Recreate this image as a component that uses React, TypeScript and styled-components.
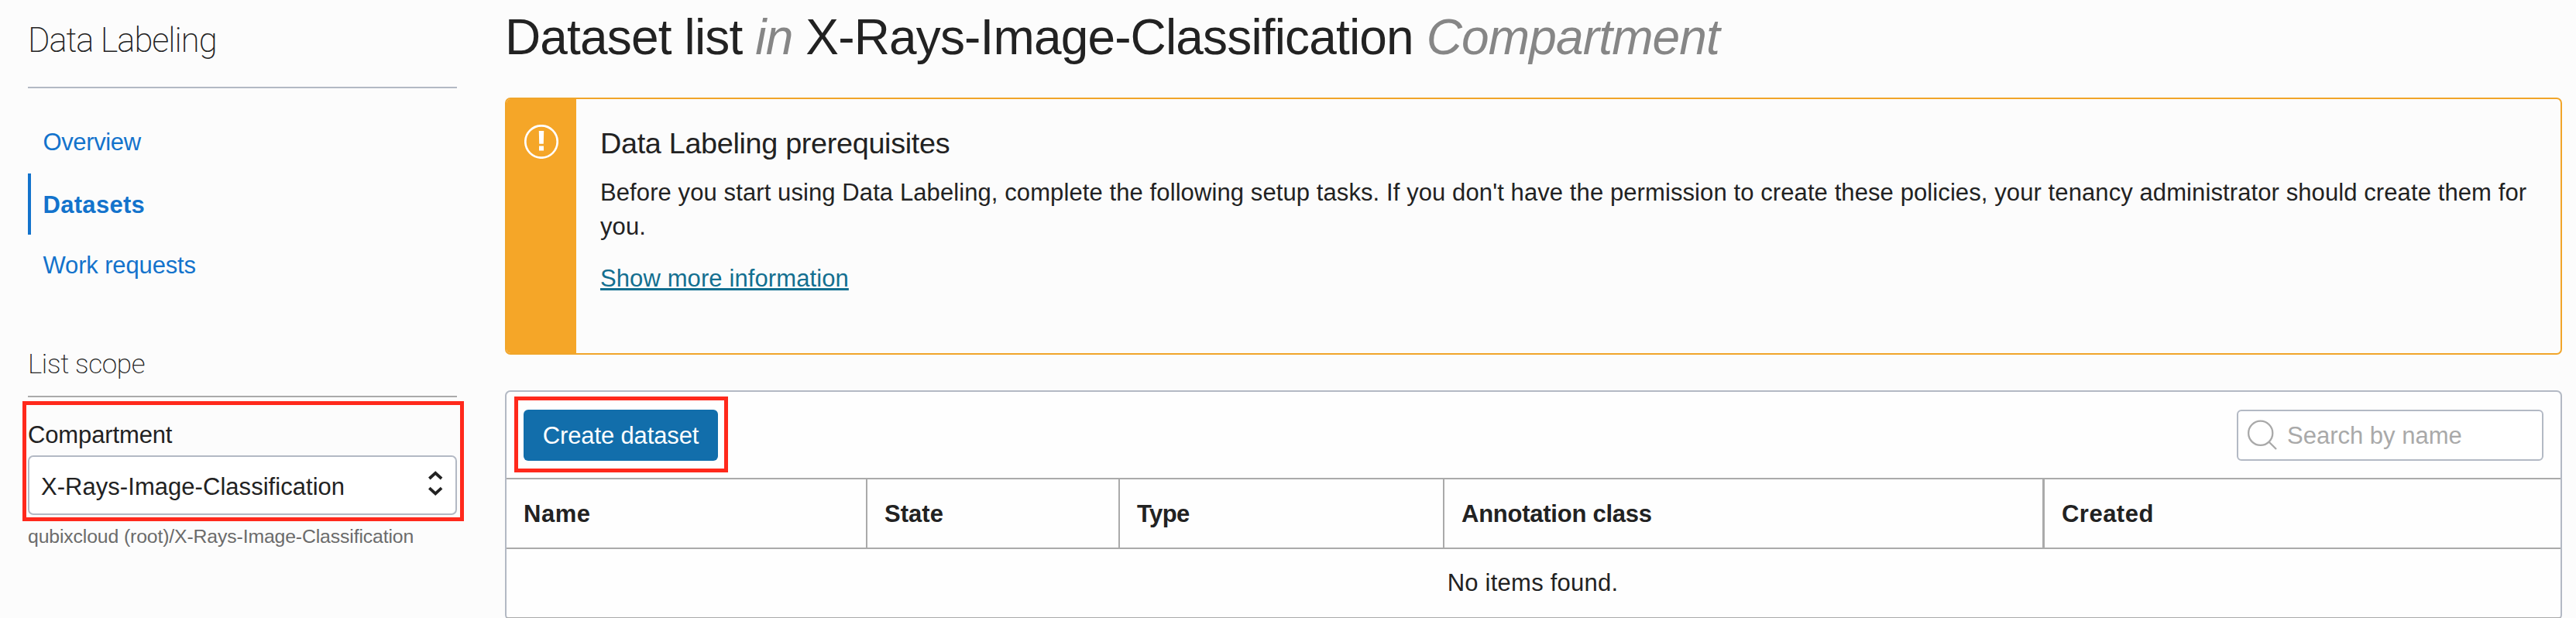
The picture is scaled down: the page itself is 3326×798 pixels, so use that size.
import React from "react";
import styled, { createGlobalStyle } from "styled-components";

const INK = "#222222";
const LINK = "#1373cc";
const LINE = "#aaaaaa";
const FIELD_LINE = "#b3b9c4";
const AMBER = "#f5a628";
const RED = "#ff291c";

const GlobalStyle = createGlobalStyle`
  *, *::before, *::after { box-sizing: border-box; }
  html, body { margin: 0; background: #fcfcfc; overflow: hidden; }
  body {
    color: ${INK};
    font-family: "Liberation Sans", Arial, sans-serif;
    font-size: 31px;
  }
  h1, h2, p { margin: 0; font-weight: 400; }
`;

const Page = styled.div`
  display: grid;
  grid-template-columns: 554px 2656px;
  column-gap: 62px;
  padding-left: 36px;
  width: 3326px;
  height: 798px;
  overflow: hidden;
`;

const Sidebar = styled.aside`
  display: flex;
  flex-direction: column;
`;

const SidebarTitle = styled.h2`
  height: 114px;
  border-bottom: 2px solid ${FIELD_LINE};
  font: 200 43.5px/105px Roboto, sans-serif;
  letter-spacing: -1.05px;
`;

const Nav = styled.nav`
  display: flex;
  flex-direction: column;
  margin-top: 30px;
`;

const NavItem = styled.a<{ $active?: boolean; $tracking: number }>`
  height: ${(p) => (p.$active ? 79 : 80)}px;
  padding-left: 15.5px;
  border-left: 4px solid ${(p) => (p.$active ? LINK : "transparent")};
  color: ${LINK};
  font-weight: ${(p) => (p.$active ? 700 : 400)};
  line-height: ${(p) => (p.$active ? 81 : 79)}px;
  letter-spacing: ${(p) => p.$tracking}px;
`;

const ScopeTitle = styled.h2`
  margin-top: 65px;
  height: 65px;
  border-bottom: 2px solid ${LINE};
  font: 200 35px/46px Roboto, sans-serif;
  letter-spacing: -0.35px;
`;

const Scope = styled.section`
  position: relative;
  display: flex;
  flex-direction: column;
  padding-top: 29px;
`;

const Highlight = styled.div<{ $inset: string }>`
  position: absolute;
  inset: ${(p) => p.$inset};
  border: 5px solid ${RED};
  pointer-events: none;
`;

const FieldLabel = styled.label`
  line-height: 39px;
  letter-spacing: -0.13px;
`;

const Select = styled.div`
  display: flex;
  align-items: center;
  justify-content: space-between;
  height: 77px;
  margin-top: 7px;
  padding: 0 14px 0 15px;
  border: 2px solid ${FIELD_LINE};
  border-radius: 7px;
  background: #fff;
`;

const SelectValue = styled.span`
  padding-top: 4px;
  line-height: 41px;
  letter-spacing: 0.04px;
`;

const ScopePath = styled.p`
  margin-top: 12px;
  color: #6b6b6b;
  font-size: 24.8px;
  line-height: 31px;
  letter-spacing: -0.14px;
`;

const Main = styled.main`
  display: flex;
  flex-direction: column;
  min-width: 0;
`;

const Heading = styled.h1`
  margin: 0 0 30px;
  font-size: 64px;
  line-height: 96px;
  letter-spacing: -0.85px;

  em { color: #868686; }
`;

const Alert = styled.section`
  display: flex;
  height: 332px;
  border: 2px solid #f1a52a;
  border-radius: 7px;
  overflow: hidden;
`;

const AlertStrip = styled.div`
  flex: 0 0 90px;
  display: flex;
  justify-content: center;
  padding: 33px 0 0 0;
  background: ${AMBER};
`;

const AlertBody = styled.div`
  flex: 1;
  display: flex;
  flex-direction: column;
  align-items: flex-start;
  padding: 33px 20px 0 31px;
`;

const AlertTitle = styled.h2`
  font-size: 37.8px;
  line-height: 48px;
  letter-spacing: -0.33px;
`;

const AlertText = styled.p`
  margin-top: 18px;
  line-height: 44px;
  letter-spacing: 0.094px;
`;

const AlertLink = styled.a`
  margin-top: 22px;
  color: #136f90;
  line-height: 45px;
  letter-spacing: 0.1px;
  text-decoration: underline;
  text-decoration-thickness: 3px;
  text-underline-offset: 2px;
`;

const Panel = styled.section`
  flex: none;
  margin-top: 46px;
  border: 2px solid ${FIELD_LINE};
  border-radius: 7px;
  background: #fefefe;
`;

const Toolbar = styled.div`
  position: relative;
  display: flex;
  justify-content: space-between;
  height: 111px;
  padding: 23px 22px 0;
`;

const PrimaryButton = styled.button`
  width: 251px;
  height: 66px;
  padding: 0;
  border: 0;
  border-radius: 6px;
  background: #126eab;
  color: #fff;
  font: 31px/65px "Liberation Sans", Arial, sans-serif;
  letter-spacing: -0.13px;
`;

const SearchBox = styled.div`
  display: flex;
  align-items: center;
  gap: 11px;
  width: 396px;
  height: 66px;
  padding-left: 10px;
  border: 2px solid ${FIELD_LINE};
  border-radius: 6px;
  background: #fff;
  color: #a9a9a9;
  line-height: 61px;
`;

const HeaderRow = styled.div`
  display: grid;
  grid-template-columns: 466px 326px 419px 775px 1fr;
  height: 92px;
  border: solid ${LINE};
  border-width: 2px 0;
`;

const HeaderCell = styled.div<{ $tracking: number; $rule: number }>`
  padding-left: 22px;
  border-right: ${(p) => p.$rule}px solid ${LINE};
  font-weight: 700;
  line-height: 89px;
  height: 88px;
  letter-spacing: ${(p) => p.$tracking}px;
`;

const EmptyRow = styled.div`
  height: 90px;
  padding-right: 2px;
  border-bottom: 2px solid ${LINE};
  line-height: 87px;
  letter-spacing: 0.236px;
  text-align: center;
`;

const WarningIcon = () => (
  <svg width="44" height="44" viewBox="0 0 44 44">
    <circle cx="22" cy="22" r="20.7" fill="none" stroke="#fff" strokeWidth="2.7" />
    <path d="M18.8 8h6.4l-.4 16.8h-5.6zM19 27.4h6v6h-6z" fill="#fff" />
  </svg>
);

const SearchIcon = () => (
  <svg width="42" height="42" viewBox="0 0 42 42" fill="none" stroke="#a9a9a9" strokeWidth="2.3">
    <circle cx="18.7" cy="18.3" r="15.6" />
    <path d="M29.7 29.7 39 39" />
  </svg>
);

const SortIcon = () => (
  <svg width="24" height="37" viewBox="0 0 24 37" fill="none" stroke={INK} strokeWidth="3.8">
    <path d="M4.3 10 12.2 2.8 20.1 10M4.3 22.2l7.9 7.2 7.9-7.2" />
  </svg>
);

const columns = [
  { label: "Name", tracking: 0.5, rule: 2 },
  { label: "State", tracking: 0.03, rule: 2 },
  { label: "Type", tracking: -0.6, rule: 2 },
  { label: "Annotation class", tracking: -0.25, rule: 3 },
  { label: "Created", tracking: 0.48, rule: 0 },
];

export default function App() {
  return (
    <>
      <GlobalStyle />
      <Page>
        <Sidebar>
          <SidebarTitle>Data Labeling</SidebarTitle>
          <Nav>
            <NavItem $tracking={-0.38}>Overview</NavItem>
            <NavItem $active $tracking={0.3}>Datasets</NavItem>
            <NavItem $tracking={-0.14}>Work requests</NavItem>
          </Nav>
          <ScopeTitle>List scope</ScopeTitle>
          <Scope>
            <FieldLabel>Compartment</FieldLabel>
            <Select>
              <SelectValue>X-Rays-Image-Classification</SelectValue>
              <SortIcon />
            </Select>
            <ScopePath>qubixcloud (root)/X-Rays-Image-Classification</ScopePath>
            <Highlight $inset="5px -9px 35px -7px" />
          </Scope>
        </Sidebar>
        <Main>
          <Heading>
            Dataset list <em>in</em> X-Rays-Image-Classification <em>Compartment</em>
          </Heading>
          <Alert>
            <AlertStrip>
              <WarningIcon />
            </AlertStrip>
            <AlertBody>
              <AlertTitle>Data Labeling prerequisites</AlertTitle>
              <AlertText>
                Before you start using Data Labeling, complete the following setup tasks. If you don't have the
                permission to create these policies, your tenancy administrator should create them for you.
              </AlertText>
              <AlertLink>Show more information</AlertLink>
            </AlertBody>
          </Alert>
          <Panel>
            <Toolbar>
              <PrimaryButton>Create dataset</PrimaryButton>
              <SearchBox>
                <SearchIcon />
                <span>Search by name</span>
              </SearchBox>
              <Highlight $inset="6px 2366px 7px 10px" />
            </Toolbar>
            <HeaderRow>
              {columns.map((c) => (
                <HeaderCell key={c.label} $tracking={c.tracking} $rule={c.rule}>
                  {c.label}
                </HeaderCell>
              ))}
            </HeaderRow>
            <EmptyRow>No items found.</EmptyRow>
          </Panel>
        </Main>
      </Page>
    </>
  );
}
